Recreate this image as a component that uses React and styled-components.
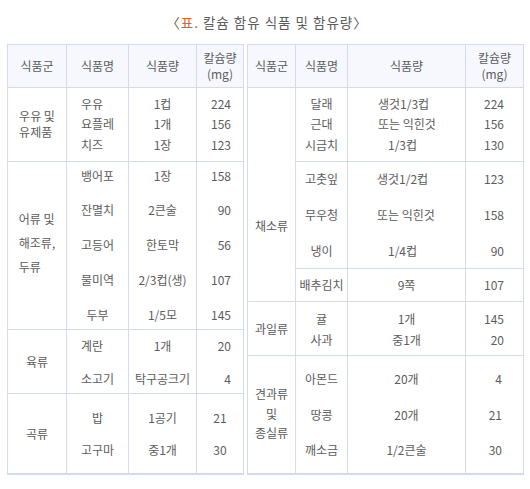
import React from "react";
import styled, { createGlobalStyle } from "styled-components";

const GlobalStyle = createGlobalStyle`
  html, body { margin: 0; padding: 0; background: #ffffff; }
  body {
    font-family: "Noto Sans CJK KR", "Noto Sans", sans-serif;
    color: #5c5c5c;
  }
`;

const LINE = "#d3dbef";

const Page = styled.div`
  width: 530px;
  padding: 0 7px;
  box-sizing: border-box;
`;

const Title = styled.div`
  height: 44px;
  display: flex;
  align-items: center;
  justify-content: center;
  padding-left: 4px;
  font-size: 13.5px;
  color: #5c5c5c;
  letter-spacing: 1px;
`;

const Mark = styled.span`
  color: #e2611f;
`;

const Tables = styled.div`
  display: flex;
  gap: 3px;
  align-items: flex-start;
`;

const Grid = styled.div`
  display: grid;
  grid-template-columns: ${(p) => p.$cols.map((c) => `${c}px`).join(" ")};
  grid-template-rows: ${(p) => p.$rows.map((r) => `${r}px`).join(" ")};
  border-left: 1px solid ${LINE};
  border-top: 1px solid ${LINE};
  border-bottom: 1px solid ${LINE};
  box-sizing: content-box;
`;

const Cell = styled.div`
  box-sizing: border-box;
  border-right: 1px solid ${LINE};
  border-bottom: 1px solid ${LINE};
  background: ${(p) => (p.$head ? "#f6f8fd" : "#ffffff")};
  grid-row: ${(p) => (p.$span ? `span ${p.$span}` : "auto")};
  display: flex;
  flex-direction: column;
  justify-content: center;
  align-items: ${(p) =>
    p.$align === "left" ? "flex-start" : p.$align === "right" ? "flex-end" : "center"};
  text-align: ${(p) => (p.$align === "block" || p.$align === "left" ? "left" : p.$align)};
  padding: ${(p) => `${p.$pt || 0}px ${p.$pr || 0}px ${p.$pb || 0}px ${p.$pl || 0}px`};
  font-size: 12px;
  color: #5c5c5c;
  overflow: visible;
`;

const Stack = styled.div`
  display: flex;
  flex-direction: column;
  align-items: ${(p) =>
    p.$align === "right" ? "flex-end" : p.$align === "center" ? "center" : "flex-start"};
`;

const Line = styled.div`
  height: ${(p) => p.$step}px;
  line-height: ${(p) => p.$step}px;
  white-space: nowrap;
  padding-left: ${(p) => p.$indent || 0}px;
`;

const HeadText = styled.div`
  line-height: 16px;
  text-align: center;
  white-space: nowrap;
`;

function Entry({ lines, step = 20, align = "center", pl, pr, pt, pb, span, indents = [] }) {
  return (
    <Cell $align={align} $pl={pl} $pr={pr} $pt={pt} $pb={pb} $span={span}>
      <Stack $align={align === "block" || align === "left" ? "left" : align}>
        {lines.map((l, i) => (
          <Line key={i} $step={step} $indent={indents[i]}>
            {l}
          </Line>
        ))}
      </Stack>
    </Cell>
  );
}

function Header() {
  return (
    <>
      <Cell $head><HeadText>식품군</HeadText></Cell>
      <Cell $head><HeadText>식품명</HeadText></Cell>
      <Cell $head><HeadText>식품량</HeadText></Cell>
      <Cell $head>
        <HeadText>칼슘량</HeadText>
        <HeadText>(mg)</HeadText>
      </Cell>
    </>
  );
}

export default function App() {
  return (
    <>
      <GlobalStyle />
      <Page>
        <Title>
          〈<Mark>표</Mark>. 칼슘 함유 식품 및 함유량〉
        </Title>
        <Tables>
          <Grid $cols={[59, 62, 68, 47]} $rows={[43, 74, 168, 64, 80]}>
            <Header />

            <Entry lines={["우유 및", "유제품"]} step={16} align="block" pb={2} />
            <Entry lines={["우유", "요플레", "치즈"]} step={20.5} align="block" />
            <Entry lines={["1컵", "1개", "1장"]} step={20.5} />
            <Entry lines={["224", "156", "123"]} step={20.5} align="right" pr={12} />

            <Entry lines={["어류 및", "해조류,", "두류"]} step={24} align="block" pb={6} />
            <Entry lines={["뱅어포", "잔멸치", "고등어", "물미역", "두부"]} step={34.8} />
            <Entry lines={["1장", "2큰술", "한토막", "2/3컵(생)", "1/5모"]} step={34.8} />
            <Entry lines={["158", "90", "56", "107", "145"]} step={34.8} align="right" pr={12} />

            <Entry lines={["육류"]} step={20} />
            <Entry lines={["계란", "소고기"]} step={33} align="block" />
            <Entry lines={["1개", "탁구공크기"]} step={33} />
            <Entry lines={["20", "4"]} step={33} align="right" pr={12} />

            <Entry lines={["곡류"]} step={20} />
            <Entry lines={["밥", "고구마"]} step={31.5} />
            <Entry lines={["1공기", "중1개"]} step={31.5} />
            <Entry lines={["21", "30"]} step={31.5} />
          </Grid>

          <Grid $cols={[48, 52, 118, 58]} $rows={[43, 74, 107, 33, 54, 118]}>
            <Header />

            <Entry lines={["채소류"]} step={20} span={3} pt={62} />
            <Entry lines={["달래", "근대", "시금치"]} step={20.5} />
            <Entry
              lines={["생것1/3컵", "또는 익힌것", "1/3컵"]}
              step={20.5}
              align="left"
              pl={30}
              indents={[0, 0, 10]}
            />
            <Entry lines={["224", "156", "130"]} step={20.5} align="right" pr={19} />

            <Entry lines={["고춧잎", "무우청", "냉이"]} step={36} />
            <Entry
              lines={["생것1/2컵", "또는 익힌것", "1/4컵"]}
              step={36}
              align="left"
              pl={29}
              indents={[0, 0, 11]}
            />
            <Entry lines={["123", "158", "90"]} step={36} align="right" pr={19} />

            <Entry lines={["배추김치"]} step={20} />
            <Entry lines={["9쪽"]} step={20} />
            <Entry lines={["107"]} step={20} align="right" pr={19} />

            <Entry lines={["과일류"]} step={20} />
            <Entry lines={["귤", "사과"]} step={21} />
            <Entry lines={["1개", "중1개"]} step={21} />
            <Entry lines={["145", "20"]} step={21} align="right" pr={19} />

            <Entry lines={["견과류", "및", "종실류"]} step={19.5} pb={2} />
            <Entry lines={["아몬드", "땅콩", "깨소금"]} step={35.5} />
            <Entry lines={["20개", "20개", "1/2큰술"]} step={35.5} />
            <Entry lines={["4", "21", "30"]} step={35.5} align="right" pr={21} />
          </Grid>
        </Tables>
      </Page>
    </>
  );
}
